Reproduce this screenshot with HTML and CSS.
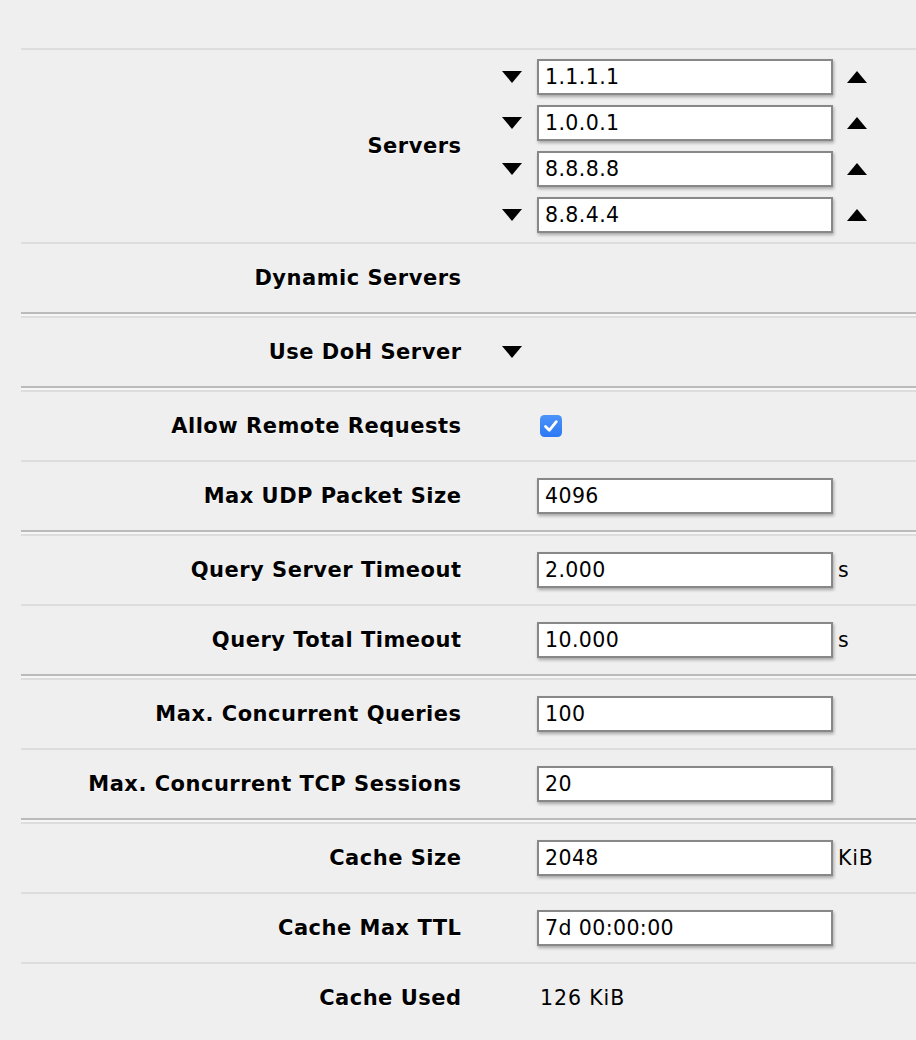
FILE: index.html
```html
<!DOCTYPE html>
<html lang="en">
<head>
    <meta charset="UTF-8">
    <meta name="viewport" content="width=device-width, initial-scale=1.0">
    <title>DNS settings</title>
    <link rel="stylesheet" href="styles.css">
</head>
<body>
    <div class="form">
      <div class="group">
        <div class="row servers">
          <div class="label">Servers</div>

          <span class="arrow down"><svg width="20" height="12" viewBox="0 0 20 12"><polygon points="0,0 20,0 10,12"/></svg></span>
          <input type="text" value="1.1.1.1">
          <span class="arrow up"><svg width="20" height="12" viewBox="0 0 20 12"><polygon points="0,12 20,12 10,0"/></svg></span>

          <span class="arrow down"><svg width="20" height="12" viewBox="0 0 20 12"><polygon points="0,0 20,0 10,12"/></svg></span>
          <input type="text" value="1.0.0.1">
          <span class="arrow up"><svg width="20" height="12" viewBox="0 0 20 12"><polygon points="0,12 20,12 10,0"/></svg></span>

          <span class="arrow down"><svg width="20" height="12" viewBox="0 0 20 12"><polygon points="0,0 20,0 10,12"/></svg></span>
          <input type="text" value="8.8.8.8">
          <span class="arrow up"><svg width="20" height="12" viewBox="0 0 20 12"><polygon points="0,12 20,12 10,0"/></svg></span>

          <span class="arrow down"><svg width="20" height="12" viewBox="0 0 20 12"><polygon points="0,0 20,0 10,12"/></svg></span>
          <input type="text" value="8.8.4.4">
          <span class="arrow up"><svg width="20" height="12" viewBox="0 0 20 12"><polygon points="0,12 20,12 10,0"/></svg></span>
        </div>
        <div class="row">
          <div class="label">Dynamic Servers</div>
        </div>
      </div>

      <div class="group">
        <div class="row">
          <div class="label">Use DoH Server</div>
          <span class="arrow down"><svg width="20" height="12" viewBox="0 0 20 12"><polygon points="0,0 20,0 10,12"/></svg></span>
        </div>
      </div>

      <div class="group">
        <div class="row">
          <div class="label">Allow Remote Requests</div>
          <span class="check">
            <svg width="22" height="22" viewBox="0 0 22 22">
              <defs>
                <linearGradient id="cb" x1="0" y1="0" x2="0" y2="1">
                  <stop offset="0" stop-color="#4b93fa"/>
                  <stop offset="1" stop-color="#2d78f4"/>
                </linearGradient>
              </defs>
              <rect x="0" y="0" width="22" height="22" rx="4.5" fill="url(#cb)"/>
              <path d="M5.5 11.5 L9.3 15.3 L16.3 6.7" fill="none" stroke="#fff" stroke-width="2.8" stroke-linecap="round" stroke-linejoin="round"/>
            </svg>
          </span>
        </div>
        <div class="row">
          <div class="label">Max UDP Packet Size</div>
          <input type="text" value="4096">
        </div>
      </div>

      <div class="group">
        <div class="row">
          <div class="label">Query Server Timeout</div>
          <input type="text" value="2.000">
          <span class="unit">s</span>
        </div>
        <div class="row">
          <div class="label">Query Total Timeout</div>
          <input type="text" value="10.000">
          <span class="unit">s</span>
        </div>
      </div>

      <div class="group">
        <div class="row">
          <div class="label">Max. Concurrent Queries</div>
          <input type="text" value="100">
        </div>
        <div class="row">
          <div class="label">Max. Concurrent TCP Sessions</div>
          <input type="text" value="20">
        </div>
      </div>

      <div class="group">
        <div class="row">
          <div class="label">Cache Size</div>
          <input type="text" value="2048">
          <span class="unit">KiB</span>
        </div>
        <div class="row">
          <div class="label">Cache Max TTL</div>
          <input type="text" value="7d 00:00:00">
        </div>
        <div class="row">
          <div class="label">Cache Used</div>
          <span class="text">126 KiB</span>
        </div>
      </div>
    </div>
</body>
</html>
```

FILE: styles.css
```css
body {
    margin: 0;
    background: #efefef;
    font-family: "DejaVu Sans", Verdana, sans-serif;
    font-size: 20px;
    color: #000;
}
.form {
    padding-top: 48px;
    margin-left: 21px;
}
.group {
    border-bottom: 2px solid #bbb;
}
.group + .group {
    border-top: 2px solid #f6f6f6;
}
.group:last-child {
    border-bottom: none;
}
.row {
    display: grid;
    grid-template-columns: 440px 76px 296px auto;
    grid-auto-rows: 36px;
    align-items: center;
    border-top: 2px solid #ddd;
    padding: 16px 0;
}
.row.servers {
    padding: 9px 0;
    row-gap: 10px;
}
.label {
    grid-column: 1;
    text-align: right;
    font-size: 21px;
    font-weight: bold;
    letter-spacing: 0.5px;
    margin-right: -0.5px;
    text-shadow: 0 1px 1px #fff;
    white-space: nowrap;
}
.servers .label {
    grid-row: 1 / span 4;
}
.arrow {
    display: flex;
    align-items: center;
}
.arrow.down {
    grid-column: 2;
    justify-self: end;
    margin-right: 15px;
}
.arrow.up {
    grid-column: 4;
    margin-left: 14px;
}
.row input {
    grid-column: 3;
    box-sizing: border-box;
    width: 296px;
    height: 36px;
    margin: 0;
    padding: 0 6px;
    border: 2px solid #888;
    background: #fff;
    box-shadow: 1px 2px 3px rgba(0, 0, 0, 0.3);
    font-family: "DejaVu Sans", Verdana, sans-serif;
    font-size: 20.5px;
    letter-spacing: 0.4px;
    color: #000;
    outline: none;
}
.unit {
    grid-column: 4;
    margin-left: 5px;
    font-size: 20.5px;
    letter-spacing: 0.8px;
}
.check {
    grid-column: 3;
    display: flex;
    margin-left: 3px;
}
.text {
    grid-column: 3;
    margin-left: 3px;
    font-size: 20.5px;
    letter-spacing: 0.9px;
}
```
